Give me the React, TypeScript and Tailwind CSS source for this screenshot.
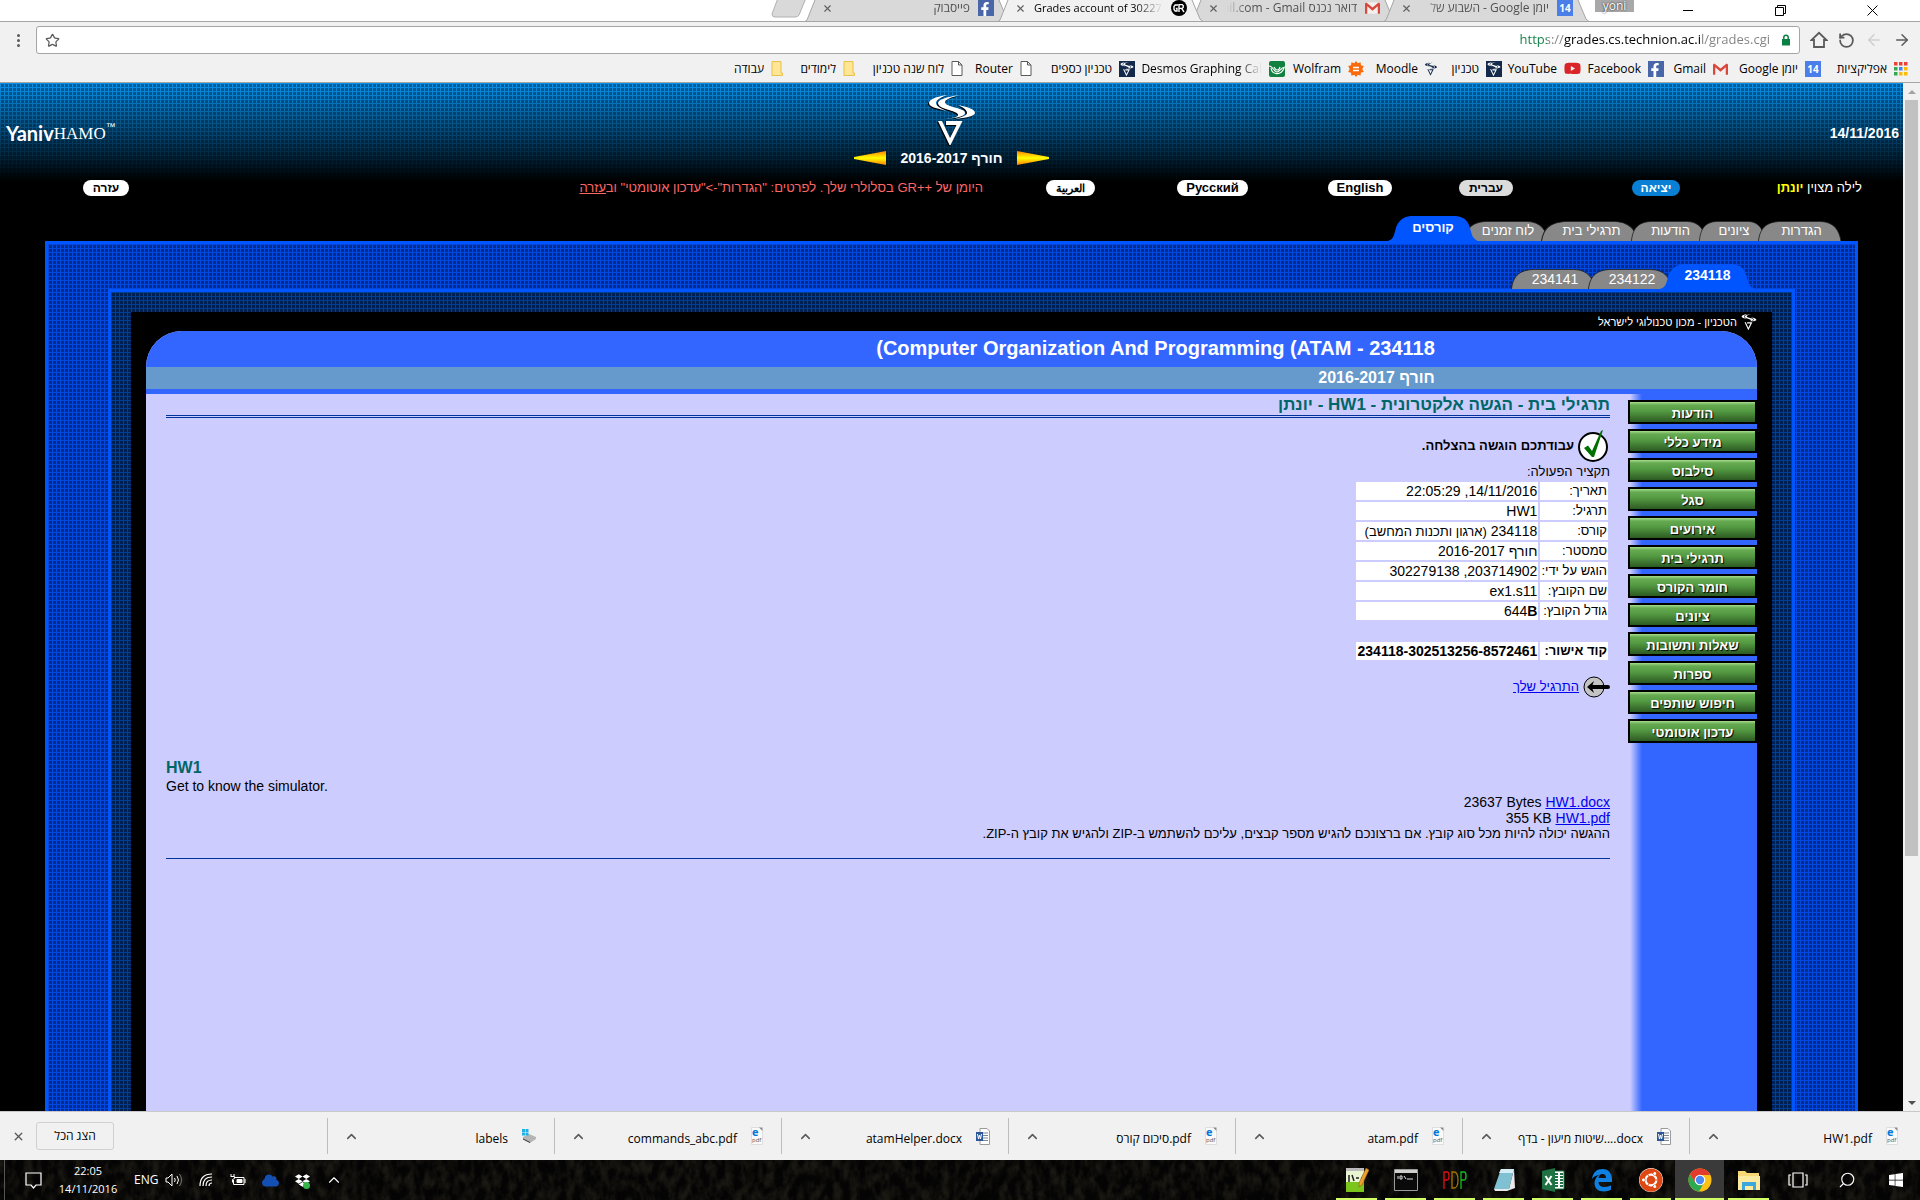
import type { ReactNode } from "react";
import { FaFacebookF, FaYoutube, FaUbuntu, FaEdge, FaDropbox, FaCloud, FaWindows } from "react-icons/fa";
import { ArrowLeft, ArrowRight, ChevronUp, RotateCcw, Search, Star, X } from "lucide-react";

const UI = "font-['Open_Sans','Noto_Sans',sans-serif]";
const ARIAL = "font-['Liberation_Sans',Arial,sans-serif]";

/* ---------- small icons ---------- */

const Facebook = () => (
  <span className="flex size-4 shrink-0 items-end justify-end overflow-hidden bg-[#4966a8] pr-[2px] text-[14px] text-white">
    <FaFacebookF />
  </span>
);

const Calendar = () => (
  <span className="flex size-4 shrink-0 items-center justify-center bg-[#4a7ee8] text-[10px] font-bold text-white">14</span>
);

const Gmail = () => (
  <svg viewBox="0 0 16 12" className="h-3 w-[15px] shrink-0">
    <path d="M1 0h14v12H1z" fill="#f3f0ef" />
    <path d="M0 1.2 1.5 0 8 5.4 14.5 0 16 1.2V12h-2.4V4.2L8 8.8 2.4 4.2V12H0z" fill="#d8493c" />
  </svg>
);

const Grades = () => (
  <svg viewBox="0 0 16 16" className="size-4 shrink-0">
    <circle cx="8" cy="8" r="8" fill="#000" />
    <path d="M7 5H4.2L3 6.5v3L4.2 11H6V8.4H4.8M8 12V4.6h3.2l1 1v1.8l-1 1H8M10.6 8.4 13 12" fill="none" stroke="#fff" strokeWidth="1.4" />
  </svg>
);

const TechnionMark = ({ className }: { className: string }) => (
  <svg viewBox="0 0 46 50" className={className} fill="currentColor">
    <path d="M18 0C5 2 0 5 0 8c0 4 7 5 18 8-7-3-11-5-11-8 0-3 4-5 11-8z" />
    <path d="M31 0C16 2 9 5 9 8c0 3 4 5 11 7 6 2 9 3 9 5 0 2-5 3-13 4 13-1 20-3 20-6 0-3-5-4-12-6-6-2-8-3-8-5 0-2 6-5 15-7z" />
    <path d="M29 10c9 2 17 4 17 8 0 3-9 5-20 6 8-2 12-4 12-6 0-3-3-5-9-8z" />
    <path d="M9 26h4l8 17 6.500-13H17v-4h16.500L21.500 50h-1z" />
  </svg>
);

const TechnionIcon = () => (
  <span className="flex size-4 shrink-0 items-center justify-center bg-[#13294b] text-white">
    <TechnionMark className="h-[14px] w-[14px]" />
  </span>
);

const Moodle = () => <TechnionMark className="h-4 w-3 shrink-0 text-[#13294b]" />;

const YouTubeIcon = () => <FaYoutube className="size-[17px] shrink-0 text-[#d9252a]" />;

const Wolfram = () => (
  <svg viewBox="0 0 16 16" className="size-4 shrink-0">
    <path d="m8 0 1.8 2.3L12.600 1.300l.3 3 2.900.700L14.300 8l1.500 2.900-2.900.700-.3 3L9.800 13.700 8 16l-1.800-2.300-2.800 1-.3-3-2.900-.700L1.700 8 .2 5l2.900-.700.3-3 2.800 1z" fill="#f96a0b" />
    <path d="M5 6.500h6M5 9.500h6" stroke="#fff" strokeWidth="1.300" />
  </svg>
);

const Desmos = () => (
  <svg viewBox="0 0 16 16" className="size-4 shrink-0">
    <rect width="16" height="16" rx="2" fill="#12803f" />
    <path d="M0 5c4 0 5 6 8 6s3-4 8-5M2 7c1 7 10 8 13 0M5 6c2 4 5 4 6 0" fill="none" stroke="#fff" strokeWidth="1.100" />
  </svg>
);

const Page = () => (
  <svg viewBox="0 0 12 15" className="h-[15px] w-3 shrink-0">
    <path d="M1 .500h6.500L11 4v10.500H1zM7.500.500V4H11" fill="#fff" stroke="#5a5a5a" />
  </svg>
);

const Folder = () => (
  <svg viewBox="0 0 12 15" className="h-[15px] w-3 shrink-0">
    <path d="M1 .500h9V12h1.500v2.500H1z" fill="#ffe694" stroke="#e8c04c" />
  </svg>
);

const Apps = () => (
  <svg viewBox="0 0 14 14" className="size-[14px] shrink-0">
    {["#ea4335", "#ea4335", "#ea4335", "#34a853", "#4285f4", "#fbbc05", "#34a853", "#fbbc05", "#fbbc05"].map((fill, i) => (
      <rect key={i} x={(i % 3) * 5} y={Math.floor(i / 3) * 5} width="3.500" height="3.500" fill={fill} />
    ))}
  </svg>
);

/* ---------- browser chrome ---------- */

function BrowserTab({ title, icon, active, dir }: { title: string; icon: ReactNode; active?: boolean; dir: "rtl" | "ltr" }) {
  return (
    <div className={active ? "relative z-10 -ml-3 h-[22px] w-[205px]" : "relative -ml-3 h-[22px] w-[205px]"}>
      <svg viewBox="0 0 205 22" preserveAspectRatio="none" className="absolute inset-0 size-full">
        <path d="M0 22 2 20 10 0H194L202 19l3 3z" fill={active ? "#f1f1f1" : "#d9d9d9"} />
        <path d="M0 21.500 2 20 10 0M194 0l8 19 3 2.500" fill="none" stroke="#a5a5a5" />
        {!active && <path d="M0 21.500H205" stroke="#a5a5a5" />}
      </svg>
      <div className="relative flex h-4 items-center gap-2 pr-4 pl-[17px]">
        <button aria-label="Close tab" className="text-[#606060]"><X size={11} strokeWidth={2.500} /></button>
        <span
          dir={dir}
          className={
            dir === "rtl"
              ? "min-w-0 flex-1 text-[12px] leading-4 whitespace-nowrap text-[#505050] [mask-image:linear-gradient(to_right,transparent,black_20px)]"
              : "min-w-0 flex-1 text-[11px] leading-4 whitespace-nowrap text-black [mask-image:linear-gradient(to_left,transparent,black_28px)]"
          }
        >
          {title}
        </span>
        {icon}
      </div>
    </div>
  );
}

function TabStrip() {
  return (
    <div className="flex h-[22px] justify-end overflow-hidden border-b border-[#a5a5a5] bg-white">
      <svg viewBox="0 0 36 18" className="mr-[10px] h-[18px] w-9">
        <path d="M7-2h28l-7 17q-1 2-4 2H4q-3 0-3-3z" fill="#d9d9d9" stroke="#b0b0b0" />
      </svg>
      <BrowserTab dir="rtl" title="פייסבוק" icon={<Facebook />} />
      <BrowserTab dir="ltr" active title="Grades account of 30227" icon={<Grades />} />
      <BrowserTab dir="rtl" title="דואר נכנס ail.com - Gmail" icon={<Gmail />} />
      <BrowserTab dir="rtl" title="יומן Google - השבוע של" icon={<Calendar />} />
      <button className="mr-2 ml-[6px] flex h-3 w-[39px] items-center justify-center bg-[#a8a8a8] text-[12px] leading-3 text-white [text-shadow:0_0_2px_#000]">yoni</button>
      <button aria-label="Minimize" className="flex h-5 w-[92px] items-center justify-center"><span className="h-px w-[10px] bg-black" /></button>
      <button aria-label="Restore" className="flex h-5 w-[92px] items-center justify-center">
        <svg viewBox="0 0 11 11" className="size-[11px]" fill="none" stroke="#000"><path d="M.500 2.500h8v8h-8zM2.500 2.500v-2h8v8h-2" /></svg>
      </button>
      <button aria-label="Close" className="mr-[2px] flex h-5 w-[92px] items-center justify-center">
        <svg viewBox="0 0 11 11" className="size-[11px]" fill="none" stroke="#000"><path d="m.500.500 10 10m0-10-10 10" /></svg>
      </button>
    </div>
  );
}

function Toolbar() {
  return (
    <div className="flex h-9 items-center bg-[#f1f1f1] pr-[9px]">
      <button aria-label="Menu" className="flex w-9 flex-col items-center gap-[2px]">
        <span className="size-[3px] rounded-full bg-[#5a5a5a]" />
        <span className="size-[3px] rounded-full bg-[#5a5a5a]" />
        <span className="size-[3px] rounded-full bg-[#5a5a5a]" />
      </button>
      <div className="mr-[10px] flex h-7 flex-1 items-center justify-between rounded-[3px] border border-[#a5a5a5] bg-white px-2">
        <button aria-label="Bookmark this page" className="text-[#5a5a5a]"><Star size={15} /></button>
        <div className="flex items-center gap-[11px]">
          <input
            aria-label="Address"
            defaultValue="https://grades.cs.technion.ac.il/grades.cgi"
            className="w-[280px] bg-[linear-gradient(to_right,#0b8043_0_57px,#808080_57px_74px,#000_74px_211px,#808080_211px)] bg-clip-text text-right text-[13px] text-transparent"
          />
          <svg viewBox="0 0 10 12" className="h-3 w-[10px]">
            <path d="M1 5h8v6.500H1z" fill="#0b8043" />
            <path d="M2.800 5V3.500a2.200 2.200 0 0 1 4.400 0V5" fill="none" stroke="#0b8043" strokeWidth="1.500" />
          </svg>
        </div>
      </div>
      <div className="flex items-center gap-[10px] text-[#5a5a5a]">
        <button aria-label="Home">
          <svg viewBox="0 0 18 18" className="size-[18px]" fill="none" stroke="currentColor" strokeWidth="1.800"><path d="M4 9v7h10V9h2.500L9 1.800 1.500 9z" /></svg>
        </button>
        <button aria-label="Reload"><RotateCcw size={17} strokeWidth={2.500} /></button>
        <button aria-label="Forward" className="text-[#cfcfcf]"><ArrowLeft size={18} /></button>
        <button aria-label="Back"><ArrowRight size={18} /></button>
      </div>
    </div>
  );
}

const bookmarks: { label: string; icon: ReactNode; width: string }[] = [
  { label: "אפליקציות", icon: <Apps />, width: "w-[87px]" },
  { label: "יומן Google", icon: <Calendar />, width: "w-[93px]" },
  { label: "Gmail", icon: <Gmail />, width: "w-[64px]" },
  { label: "Facebook", icon: <Facebook />, width: "w-[83px]" },
  { label: "YouTube", icon: <YouTubeIcon />, width: "w-[79px]" },
  { label: "טכניון", icon: <TechnionIcon />, width: "w-[65px]" },
  { label: "Moodle", icon: <Moodle />, width: "w-[73px]" },
  { label: "Wolfram", icon: <Wolfram />, width: "w-[79px]" },
  { label: "Desmos Graphing Cal", icon: <Desmos />, width: "w-[150px]" },
  { label: "טכניון כספים", icon: <TechnionIcon />, width: "w-[103px]" },
  { label: "Router", icon: <Page />, width: "w-[69px]" },
  { label: "לוח שנה טכניון", icon: <Page />, width: "w-[108px]" },
  { label: "לימודים", icon: <Folder />, width: "w-[72px]" },
  { label: "עבודה", icon: <Folder />, width: "w-[60px]" },
];

function BookmarksBar() {
  return (
    <nav dir="rtl" className="flex h-[25px] items-center overflow-hidden border-b border-[#a5a5a5] bg-[#f1f1f1] pr-3 pb-[3px]">
      {bookmarks.map((b) => (
        <a key={b.label} href="#" className={`${b.width} flex shrink-0 items-center gap-[7px] text-[12px] leading-4 text-black`}>
          {b.icon}
          <span
            dir="auto"
            className={
              b.width === "w-[150px]"
                ? "whitespace-nowrap [mask-image:linear-gradient(to_left,transparent,black_24px)]"
                : "whitespace-nowrap"
            }
          >
            {b.label}
          </span>
        </a>
      ))}
    </nav>
  );
}

/* ---------- site header ---------- */

const Arrow = ({ flip, id }: { flip?: boolean; id: string }) => (
  <svg viewBox="0 0 32 14" className="h-[14px] w-8">
    <defs>
      <linearGradient id={id} x1="0" x2="0" y1="0" y2="1">
        <stop offset="0" stopColor="#ff8000" />
        <stop offset=".5" stopColor="#ffff00" />
        <stop offset="1" stopColor="#ff8000" />
      </linearGradient>
    </defs>
    <path d={flip ? "M0 0v14L32 8V6z" : "M32 0v14L0 8V6z"} fill={`url(#${id})`} />
  </svg>
);

function Masthead() {
  return (
    <header className="bg-[linear-gradient(to_bottom,transparent,#000_98px),linear-gradient(to_right,#0a90e8_1px,transparent_1px),linear-gradient(to_bottom,#0a90e8_1px,#005f9e_1px)] bg-[size:100%_100%,4px_4px,4px_4px]">
      <div className="grid h-[90px] grid-cols-[1fr_auto_1fr] items-center">
        <a href="#" className="flex items-end pt-[10px] pl-[6px] text-white">
          <span className="font-['Lato'] text-[20px] leading-6 font-bold">Yaniv</span>
          <span className="font-['Liberation_Serif'] text-[17px] leading-[22px]">HAMO</span>
          <span className="self-start text-[10px] leading-3">™</span>
        </a>
        <div className="flex flex-col items-center pt-[10px]">
          <TechnionMark className="h-[50px] w-[46px] text-white drop-shadow-[-1px_1px_0_#000]" />
          <div className="flex h-[26px] items-center gap-[15px]">
            <button aria-label="Next semester"><Arrow id="arrow-next" /></button>
            <span dir="rtl" className="text-[14px] font-bold text-white">חורף 2016-2017</span>
            <button aria-label="Previous semester"><Arrow id="arrow-prev" flip /></button>
          </div>
        </div>
        <time className="pt-[10px] pr-1 text-right text-[14px] font-bold text-white">14/11/2016</time>
      </div>
      <div className="grid h-[30px] grid-cols-[212px_1fr_158px_127px_168px_84px_256px_119px] items-center justify-items-center text-[13px] leading-4">
        <a href="#" className="rounded-full bg-white px-[10px] text-[12px] font-bold text-black">עזרה</a>
        <p dir="rtl" className="justify-self-end pr-2 text-[#ff6666]">
          היומן של ++GR בסלולרי שלך. לפרטים: "הגדרות"-&gt;"עדכון אוטומטי" וב<a href="#" className="underline">עזרה</a>
        </p>
        <button className="h-4 rounded-full bg-white px-[10px] text-[11px] leading-4 font-bold text-black">العربية</button>
        <button className="h-4 rounded-full bg-white px-[9px] leading-4 font-bold text-black">Русский</button>
        <button className="h-4 rounded-full bg-white px-[9px] leading-4 font-bold text-black">English</button>
        <button className="h-4 rounded-full bg-[#dcdcdc] px-[10px] text-[12px] leading-4 font-bold text-black">עברית</button>
        <button className="h-4 rounded-full bg-[#0a80d4] px-[9px] text-[12px] leading-4 font-bold text-white">יציאה</button>
        <p dir="rtl" className="justify-self-end pr-[41px] whitespace-nowrap text-white">
          לילה מצוין <b className="text-[#ffff00]">יונתן</b>
        </p>
      </div>
    </header>
  );
}

function SiteTab({ label, active, width }: { label: string; active?: boolean; width: string }) {
  return (
    <a
      href="#"
      className={
        active
          ? `${width} relative z-10 -mr-[7px] -ml-3 flex h-[25px] items-center justify-center pb-[2px] text-[13px] font-bold text-white`
          : `${width} relative -ml-[7px] flex h-5 items-center justify-center pl-1 text-[13px] text-white`
      }
    >
      <svg viewBox="0 0 90 25" preserveAspectRatio="none" className="absolute inset-0 size-full">
        {active ? (
          <path d="M0 25C7 23 6 16 9 9 13 2 18 0 25 0h40c8 0 13 2 16 9 3 8 2 13 9 16z" fill="#0055ff" />
        ) : (
          <path d="M.500 25C2 11 7 1 25 .500h42C83 1 88 12 90 25" fill="#888888" stroke="#222" strokeWidth="1" />
        )}
      </svg>
      <span className="relative whitespace-nowrap">{label}</span>
    </a>
  );
}

/* ---------- course page ---------- */

const menu = ["הודעות", "מידע כללי", "סילבוס", "סגל", "אירועים", "תרגילי בית", "חומר הקורס", "ציונים", "שאלות ותשובות", "ספרות", "חיפוש שותפים", "עדכון אוטומטי"];

const summary: [string, ReactNode][] = [
  ["תאריך:", "14/11/2016, 22:05:29"],
  ["תרגיל:", "HW1"],
  ["קורס:", <>234118 <span className="text-[13px]">(ארגון ותכנות המחשב)</span></>],
  ["סמסטר:", "חורף 2016-2017"],
  ["הוגש על ידי:", "203714902, 302279138"],
  ["שם הקובץ:", "ex1.s11"],
  ["גודל הקובץ:", <span dir="ltr">644<b>B</b></span>],
];

function Submission() {
  return (
    <main dir="rtl" className="min-w-0 flex-1 pr-[18px] pl-5 text-[14px] leading-4 text-black">
      <h2 className="h-6 border-b-3 border-double border-[#003399] text-[17px] leading-[21px] font-bold text-[#006666]">
        תרגילי בית - הגשה אלקטרונית - HW1 - יונתן
      </h2>
      <div className="mt-3 flex h-8 items-center gap-1 pr-[2px] text-[13px]">
        <svg viewBox="0 0 30 32" className="h-8 w-[30px]">
          <circle cx="15" cy="17" r="14" fill="#fff" stroke="#000" strokeWidth="2" />
          <path d="m6 18 4-2.500 4 5.500L23 1l2-1-9 27h-2z" fill="#007000" />
        </svg>
        <b>עבודתכם הוגשה בהצלחה.</b>
      </div>
      <p className="mt-[2px] h-4 text-[13px]">תקציר הפעולה:</p>
      <table className="border-separate border-spacing-[2px] text-right leading-4 whitespace-nowrap">
        <tbody>
          {summary.map(([label, value]) => (
            <tr key={label} className="h-[18px]">
              <th scope="row" className="bg-white px-px py-0 text-right text-[13px] font-normal">{label}</th>
              <td className="w-[182px] bg-white px-px py-0">{value}</td>
            </tr>
          ))}
          <tr className="h-[18px]"><td colSpan={2} /></tr>
          <tr className="h-[18px] font-bold">
            <th scope="row" className="bg-white px-px py-0 text-right text-[13px]">קוד אישור:</th>
            <td className="bg-white px-px py-0"><span dir="ltr">234118-302513256-8572461</span></td>
          </tr>
        </tbody>
      </table>
      <a href="#" className="mt-[14px] flex h-[22px] items-center gap-1 text-[13px] text-[#0000ee]">
        <svg viewBox="0 0 27 22" className="h-[22px] w-[27px]">
          <circle cx="11" cy="11" r="10" fill="#c4c4c4" stroke="#000" />
          <path d="m4 11 7-6-1.500 4H25q2 0 2 2t-2 2H9.500l1.500 4z" fill="#000" />
        </svg>
        <span className="underline">התרגיל שלך</span>
      </a>
      <div dir="ltr" className="mt-[60px]">
        <h3 className="text-[16px] leading-5 font-bold text-[#006666]">HW1</h3>
        <p>Get to know the simulator.</p>
      </div>
      <div className="text-right">
        <p dir="ltr">23637 Bytes <a href="#" className="text-[#0000ee] underline">HW1.docx</a></p>
        <p dir="ltr">355 KB <a href="#" className="text-[#0000ee] underline">HW1.pdf</a></p>
        <p className="text-[13px]">ההגשה יכולה להיות מכל סוג קובץ. אם ברצונכם להגיש מספר קבצים, עליכם להשתמש ב-ZIP ולהגיש את קובץ ה-ZIP.</p>
      </div>
      <hr className="mt-4 border-[#003399]" />
    </main>
  );
}

function CoursePage() {
  return (
    <div className="flex flex-1 flex-col overflow-hidden rounded-t-[36px] bg-[#ccccff]">
      <h1 className="h-9 bg-[#3366ff] pr-[20%] text-right text-[20px] leading-[34px] font-bold text-white">
        (Computer Organization And Programming (ATAM - 234118
      </h1>
      <p dir="rtl" className="h-[27px] border-b-5 border-[#3366ff] bg-[#6699cc] pr-[20%] text-[16px] leading-[22px] font-bold text-white">
        חורף 2016-2017
      </p>
      <div className="flex flex-1">
        <Submission />
        <aside className="flex w-[129px] flex-col gap-[5px] bg-[linear-gradient(to_right,#ccccff_2px,#3366ff_14px)] pt-[6px]">
          {menu.map((item) => (
            <button
              key={item}
              dir="rtl"
              className="h-6 border-2 border-black bg-[linear-gradient(to_bottom,#a9dd8e_0,#66ab52_3px,#549a42_9px,#2c5a22_100%)] pt-1 text-[13px] leading-4 font-bold text-white [text-shadow:1px_1px_1px_#000]"
            >
              {item}
            </button>
          ))}
        </aside>
      </div>
    </div>
  );
}

function Site() {
  return (
    <div className={`${ARIAL} flex min-w-0 flex-1 flex-col overflow-hidden bg-black`}>
      <Masthead />
      <nav className="flex h-[38px] shrink-0 items-end justify-end pr-[62px]">
        <SiteTab label="קורסים" active width="w-[90px]" />
        <SiteTab label="לוח זמנים" width="w-[84px]" />
        <SiteTab label="תרגילי בית" width="w-[97px]" />
        <SiteTab label="הודעות" width="w-[75px]" />
        <SiteTab label="ציונים" width="w-[66px]" />
        <SiteTab label="הגדרות" width="w-[83px]" />
      </nav>
      <div className="mx-[45px] flex flex-1 flex-col border-3 border-b-0 border-[#0055ff] bg-[#002c8c] bg-[linear-gradient(to_right,transparent_3px,#0048e0_3px),linear-gradient(to_bottom,transparent_3px,#0048e0_3px)] bg-[size:4px_4px] bg-[position:1px_1px]">
        <nav className="flex h-[45px] items-end justify-end pr-[107px] [&>a]:text-[14px]">
          <SiteTab label="234141" width="w-[84px]" />
          <SiteTab label="234122" width="w-[84px]" />
          <SiteTab label="234118" active width="w-[95px]" />
        </nav>
        <div className="mx-[60px] flex flex-1 flex-col border-3 border-b-0 border-[#0055ff] bg-[#001f52] bg-[linear-gradient(to_right,transparent_3px,#003f96_3px),linear-gradient(to_bottom,transparent_3px,#003f96_3px)] bg-[size:4px_4px] bg-[position:1px_1px] px-5 pt-5">
          <div className="flex flex-1 flex-col bg-black px-[15px]">
            <a href="#" dir="rtl" className="flex h-[19px] items-center gap-1 text-[11px] leading-4 text-white">
              <TechnionMark className="size-4" />
              הטכניון - מכון טכנולוגי לישראל
            </a>
            <CoursePage />
          </div>
        </div>
      </div>
    </div>
  );
}

function Scrollbar() {
  return (
    <div className="flex w-[17px] shrink-0 flex-col items-center bg-[#f1f1f1]">
      <button aria-label="Scroll up" className="flex h-[17px] items-center"><span className="border-4 border-t-0 border-transparent border-b-[#a3a3a3]" /></button>
      <span className="h-[756px] w-[13px] bg-[#c1c1c1]" />
      <button aria-label="Scroll down" className="mt-auto flex h-[17px] items-center"><span className="border-4 border-b-0 border-transparent border-t-[#505050]" /></button>
    </div>
  );
}

/* ---------- downloads ---------- */

const PdfIcon = () => (
  <svg viewBox="0 0 12 18" className="h-[18px] w-3">
    <path d="M.500.500h8l3 3v14H.500z" fill="#fafafa" stroke="#dedede" />
    <path d="M8 .500h3.500V4z" fill="#8a8a8a" />
    <text x="1" y="9" fontSize="11" fontWeight="bold" fill="#0078d7" fontFamily="Open Sans">e</text>
    <text x="1" y="15" fontSize="6" fill="#555" fontFamily="Open Sans">pdf</text>
  </svg>
);

const WordIcon = () => (
  <svg viewBox="0 0 14 17" className="h-[17px] w-[14px]">
    <path d="M4 .500h7L13.500 3v13.500H4z" fill="#fff" stroke="#9a9a9a" />
    <path d="M6 5h6M6 7.500h6M6 10h6M6 12.500h6" stroke="#7a8797" />
    <path d="M0 4h7v9H0z" fill="#2b579a" />
    <path d="m1.500 6 1 5 1-4 1 4 1-5" fill="none" stroke="#fff" />
  </svg>
);

const DiskIcon = () => (
  <svg viewBox="0 0 14 14" className="size-[14px]">
    <path d="M1 8 7 5l7 3v2l-6 4-7-4z" fill="#b5b5b5" />
    <path d="M1 9.500 8 13v1L1 10.500z" fill="#333" />
    <path d="M0 0h3v3H0zM3.500 0h3v3h-3zM0 3.500h3v3H0zM3.500 3.500h3v3h-3z" fill="#20b0e8" />
  </svg>
);

const downloads: [string, ReactNode][] = [
  ["labels", <DiskIcon />],
  ["commands_abc.pdf", <PdfIcon />],
  ["atamHelper.docx", <WordIcon />],
  ["סיכום קורס.pdf", <PdfIcon />],
  ["atam.pdf", <PdfIcon />],
  ["שיטות מיעון - בדף....docx", <WordIcon />],
  ["HW1.pdf", <PdfIcon />],
];

function DownloadShelf() {
  return (
    <div className="flex h-[49px] shrink-0 items-center border-t border-[#c8c8c8] bg-[#f1f1f1] text-black">
      <button aria-label="Close downloads" className="ml-3 text-[#5a5a5a]"><X size={13} strokeWidth={2.500} /></button>
      <button className="ml-[11px] h-7 w-[78px] rounded-[3px] border border-[#d0d0d0] text-[12px]">הצג הכל</button>
      <div className="flex flex-1 justify-end pr-1">
        {downloads.map(([name, icon]) => (
          <div key={name} className="flex h-9 w-[227px] items-center border-l border-[#bdbdbd] pr-[18px] pl-4">
            <button aria-label="Options" className="text-[#5a5a5a]"><ChevronUp size={15} strokeWidth={2.500} /></button>
            <button className="ml-auto flex items-center gap-[14px] text-[12px]">
              <span dir="ltr" className="pt-[6px] whitespace-nowrap">{name}</span>
              {icon}
            </button>
          </div>
        ))}
      </div>
    </div>
  );
}

/* ---------- taskbar ---------- */

const TaskIcon = {
  npp: (
    <svg viewBox="0 0 24 28" className="h-7 w-6">
      <path d="M1 2h18v24H1z" fill="#e9f5d0" />
      <path d="M1 16h18v10H1z" fill="#7cc51d" />
      <path d="M1 2h18v3H1z" fill="#bbb" />
      <path d="M4 9v7M7 9l2 6M11 12h3M16 12h3" stroke="#222" strokeWidth="1.500" />
      <path d="m21 2 3 2-7 15-3 2v-4z" fill="#f0a030" stroke="#8a5a10" strokeWidth=".6" />
    </svg>
  ),
  cmd: (
    <svg viewBox="0 0 24 24" className="size-6">
      <path d="M.500 1.500h23v21H.500z" fill="#0a0a0a" stroke="#9a9a9a" />
      <path d="M1 2h22v3H1z" fill="#d0d0d0" />
      <path d="M4 8v3M6 8h2v3H6zM10 8l2 3M13 11h6" fill="none" stroke="#ddd" />
    </svg>
  ),
  pdp: (
    <svg viewBox="0 0 24 18" className="h-[18px] w-6" fill="none" strokeWidth="1.300">
      <path d="M1 18V1h3q2 0 2 4t-2 4H1" stroke="#e01010" />
      <path d="M9 1v16h2q4 0 4-8t-4-8z" stroke="#a87000" />
      <path d="M18 18V1h3q2 0 2 4t-2 4h-3" stroke="#10c020" />
    </svg>
  ),
  notepad: (
    <svg viewBox="0 0 24 24" className="size-6">
      <path d="M9 1h13l-5 20H2z" fill="#7fc0d2" />
      <path d="M9 1h13l-1 4H7z" fill="#d5eef5" />
      <path d="m17 21 5-20 1 19-8 3H3l-1-2z" fill="#e9e9e9" />
    </svg>
  ),
  excel: (
    <svg viewBox="0 0 24 24" className="size-6">
      <path d="M12 3h11v18H12z" fill="#fff" stroke="#1f7244" />
      <path d="M14 6h3M14 9h3M14 12h3M14 15h3M14 18h3M19 6h3M19 9h3M19 12h3M19 15h3M19 18h3" stroke="#1f7244" strokeWidth="1.800" />
      <path d="M1 3 14 0v24L1 21z" fill="#1f7244" />
      <path d="m4.500 8 6 9m0-9-6 9" stroke="#fff" strokeWidth="2" />
    </svg>
  ),
  chrome: (
    <svg viewBox="0 0 24 24" className="size-6">
      <circle cx="12" cy="12" r="11.500" fill="#fbc116" />
      <path d="M2 6.200A11.500 11.500 0 0 0 11 23.500l5-9-8.500 0z" fill="#2da94f" />
      <path d="M2 6.200 7.300 14.600 12 7h10.200A11.500 11.500 0 0 0 2 6.200z" fill="#e33b2e" />
      <circle cx="12" cy="12" r="5.300" fill="#fff" />
      <circle cx="12" cy="12" r="4.200" fill="#4a8af4" />
    </svg>
  ),
  edge: (
    <svg viewBox="0 0 22 24" className="h-6 w-[22px]">
      <path d="M1 11C2 4 6 1 11.500 1 18 1 21 6 21 11v3H7.500c0 3 2.500 5 6 5 2.500 0 4.500-.600 6.500-1.700v4.500C18 23 15.500 23.500 13 23.500 7 23.500 3.500 20 3.500 15c0-3.500 2-6.500 5-8.200C5 7.500 2.500 9 1 11zm6.500-1H15c0-2.500-1.200-4-3.500-4s-3.700 1.800-4 4z" fill="#0f7fe0" />
    </svg>
  ),
  explorer: (
    <svg viewBox="0 0 24 22" className="h-[22px] w-6">
      <path d="M1 2h7l2 2h12v17H1z" fill="#f8d775" />
      <path d="M1 7h22v14H1z" fill="#fde9a0" />
      <path d="M5 13h14v8h-3v-4H8v4H5z" fill="#3ba7dd" />
    </svg>
  ),
  taskview: (
    <svg viewBox="0 0 20 16" className="h-4 w-5" fill="none" stroke="#fff" strokeWidth="1.200">
      <path d="M5 1h10v14H5zM3 3H1v10h2M17 3h2v10h-2" />
    </svg>
  ),
};

const tasks: { name: string; icon: ReactNode; state?: "open" | "active" }[] = [
  { name: "Notepad++", icon: TaskIcon.npp, state: "open" },
  { name: "Command Prompt", icon: TaskIcon.cmd, state: "open" },
  { name: "PDP simulator", icon: TaskIcon.pdp, state: "open" },
  { name: "Notepad", icon: TaskIcon.notepad, state: "open" },
  { name: "Excel", icon: TaskIcon.excel, state: "open" },
  { name: "Edge", icon: TaskIcon.edge, state: "open" },
  { name: "Ubuntu", icon: <span className="flex size-6 items-center justify-center rounded-full bg-white text-[#dd4814]"><FaUbuntu size={24} /></span>, state: "open" },
  { name: "Chrome", icon: TaskIcon.chrome, state: "active" },
  { name: "File Explorer", icon: TaskIcon.explorer, state: "open" },
  { name: "Task View", icon: TaskIcon.taskview },
  { name: "Search", icon: <Search size={18} strokeWidth={1.500} className="-scale-x-100 text-white" /> },
  { name: "Start", icon: <FaWindows size={16} className="text-white" /> },
];

function Taskbar() {
  return (
    <footer className="relative flex h-10 shrink-0 items-center overflow-hidden bg-[#040404] text-white">
      <svg className="absolute inset-0 size-full opacity-20" aria-hidden="true">
        <filter id="forest">
          <feTurbulence type="fractalNoise" baseFrequency=".12 .07" numOctaves="4" seed="4" />
          <feColorMatrix values="0 0 0 0 .17  0 0 0 0 .14  0 0 0 0 .07  2.500 0 0 0 -.9" />
        </filter>
        <rect width="100%" height="100%" filter="url(#forest)" />
      </svg>
      <div className="relative flex flex-1 items-center">
        <span className="mr-5 ml-1 h-10 w-px bg-[#555]" />
        <button aria-label="Notifications">
          <svg viewBox="0 0 17 17" className="size-[17px]" fill="none" stroke="#fff" strokeWidth="1.200"><path d="M1 1h15v12h-5l-2.500 3L6 13H1z" /></svg>
        </button>
        <time className="w-[92px] pb-px text-center text-[11px] leading-[18px]">22:05<br />14/11/2016</time>
        <button className="w-6 text-[12px]">ENG</button>
        <div className="flex items-center [&>button]:flex [&>button]:w-8 [&>button]:justify-center">
          <button aria-label="Volume">
            <svg viewBox="0 0 18 14" className="h-[14px] w-[18px]" fill="none" stroke="#fff"><path d="M1 5h2l4-4v12L3 9H1zM9.500 5q1.500 2 0 4M12 3q3 4 0 8" /><path d="M14.500 1q4 6 0 12" stroke="#777" /></svg>
          </button>
          <button aria-label="Network">
            <svg viewBox="0 0 14 14" className="size-[14px]" fill="none" stroke="#fff" strokeWidth="1.200"><path d="M1 13Q1 1 13 1M4 13q0-9 9-9M7 13q0-6 6-6M10 13q0-3 3-3" /></svg>
          </button>
          <button aria-label="Battery">
            <svg viewBox="0 0 16 12" className="h-3 w-4" fill="none" stroke="#fff"><path d="M5 3.500h9v7H3.500V6M15 5v4M1 0v2M4 0v2M.500 2.500h4v2l-2 1v3" /><path d="M7 5.500h5v3H7z" fill="#fff" /></svg>
          </button>
          <button aria-label="OneDrive"><FaCloud size={17} className="text-[#1450b4]" /></button>
          <button aria-label="Dropbox" className="relative">
            <FaDropbox size={15} />
            <span className="absolute right-2 -bottom-px size-[7px] rounded-full bg-[#36b44a]" />
          </button>
          <button aria-label="Show hidden icons"><ChevronUp size={18} strokeWidth={1.500} /></button>
        </div>
      </div>
      <div className="relative flex h-10">
        {tasks.map((t) => (
          <button
            key={t.name}
            aria-label={t.name}
            className={
              t.state === "active"
                ? "relative flex w-[49px] items-center justify-center bg-[#3a3a3a]"
                : "relative flex w-[49px] items-center justify-center"
            }
          >
            {t.icon}
            {t.state === "active" && <span className="absolute inset-x-0 bottom-0 h-[2px] bg-[#d0ff66]" />}
            {t.state === "open" && <span className="absolute inset-x-1 bottom-0 h-[2px] bg-[#d0ff66]" />}
          </button>
        ))}
      </div>
    </footer>
  );
}

export default function App() {
  return (
    <div className={`${UI} flex h-screen flex-col overflow-hidden`}>
      <TabStrip />
      <Toolbar />
      <BookmarksBar />
      <div className="flex min-h-0 flex-1">
        <Site />
        <Scrollbar />
      </div>
      <DownloadShelf />
      <Taskbar />
    </div>
  );
}
